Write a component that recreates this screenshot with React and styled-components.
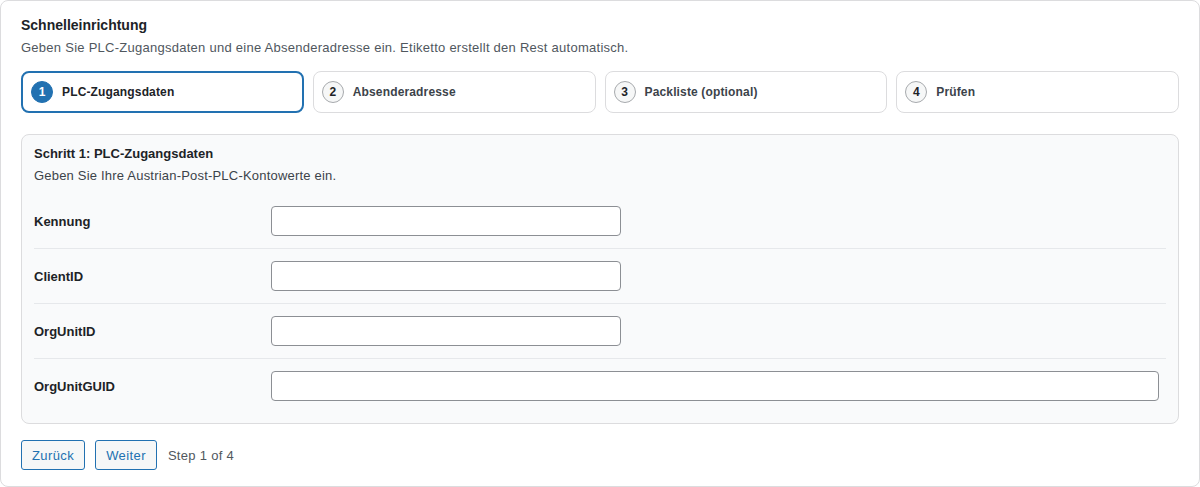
import React from 'react'
import styled, { createGlobalStyle } from 'styled-components'

const GlobalStyle = createGlobalStyle`
  html, body {
    margin: 0;
    padding: 0;
    background: #ffffff;
  }
  body {
    font-family: "Liberation Sans", Arial, sans-serif;
    color: #1d2327;
    -webkit-font-smoothing: antialiased;
  }
  * {
    box-sizing: border-box;
  }
`;

const Card = styled.div`
  width: 1200px;
  height: 487px;
  border: 1px solid #dcdcde;
  border-radius: 8px;
  background: #ffffff;
  padding: 14px 20px 16px;
  display: flex;
  flex-direction: column;
`;

const Title = styled.h2`
  font-size: 14px;
  font-weight: 700;
  line-height: 20px;
  margin: 0;
  color: #1d2327;
`;

const Intro = styled.p`
  font-size: 13px;
  line-height: 18px;
  margin: 4px 0 0;
  color: #50575e;
  letter-spacing: 0.26px;
`;

const Steps = styled.div`
  display: grid;
  grid-template-columns: repeat(4, 1fr);
  gap: 9px;
  margin-top: 14px;
`;

const Step = styled.div`
  height: 42px;
  display: flex;
  align-items: center;
  gap: 9px;
  padding: 0 8px;
  border: ${p => (p.$active ? '2px solid #2271b1' : '1px solid #dcdcde')};
  border-radius: 8px;
  background: #ffffff;
`;

const StepNumber = styled.span`
  width: 22px;
  height: 22px;
  flex: none;
  border-radius: 50%;
  display: flex;
  align-items: center;
  justify-content: center;
  font-size: 12px;
  font-weight: 700;
  background: ${p => (p.$active ? '#2271b1' : '#f6f7f7')};
  color: ${p => (p.$active ? '#ffffff' : '#1d2327')};
  border: 1px solid ${p => (p.$active ? '#2271b1' : '#a7aaad')};
`;

const StepLabel = styled.span`
  font-size: 12px;
  font-weight: 700;
  letter-spacing: 0.15px;
  color: ${p => (p.$active ? '#1d2327' : '#3c434a')};
`;

const Panel = styled.section`
  margin-top: 21px;
  border: 1px solid #dcdcde;
  border-radius: 8px;
  background: #f9fafb;
  padding: 10px 12px 10px;
`;

const PanelTitle = styled.h3`
  font-size: 13px;
  font-weight: 700;
  line-height: 18px;
  margin: 0;
  color: #1d2327;
`;

const PanelText = styled.p`
  font-size: 13px;
  line-height: 18px;
  margin: 4px 0 0;
  color: #3c434a;
  letter-spacing: 0.2px;
`;

const Fields = styled.div`
  margin-top: 9px;
`;

const Row = styled.div`
  display: grid;
  grid-template-columns: 237px 1fr;
  align-items: center;
  padding: 12px 0;
  border-top: ${p => (p.$first ? 'none' : '1px solid #e6e8eb')};
`;

const Label = styled.label`
  font-size: 13px;
  font-weight: 700;
  color: #1d2327;
`;

const Input = styled.input`
  height: 30px;
  width: ${p => (p.$wide ? 'calc(100% - 7px)' : '350px')};
  border: 1px solid #8c8f94;
  border-radius: 4px;
  background: #ffffff;
  padding: 0 8px;
  font-size: 14px;
  font-family: inherit;
  outline: none;
`;

const Actions = styled.div`
  margin-top: auto;
  display: flex;
  align-items: center;
  gap: 10px;
`;

const Button = styled.button`
  height: 30px;
  padding: 0 10px;
  border: 1px solid #2271b1;
  border-radius: 3px;
  background: #f6f7f7;
  color: #2271b1;
  font-size: 13px;
  letter-spacing: 0.4px;
  font-family: inherit;
  cursor: pointer;
`;

const StepInfo = styled.span`
  font-size: 13px;
  color: #50575e;
  letter-spacing: 0.3px;
  margin-left: 1px;
`;

const steps = [
  'PLC-Zugangsdaten',
  'Absenderadresse',
  'Packliste (optional)',
  'Prüfen',
];

const fields = [
  { label: 'Kennung' },
  { label: 'ClientID' },
  { label: 'OrgUnitID' },
  { label: 'OrgUnitGUID', wide: true },
];

export default function App() {
  return (
    <>
      <GlobalStyle />
      <Card>
        <Title>Schnelleinrichtung</Title>
        <Intro>
          Geben Sie PLC-Zugangsdaten und eine Absenderadresse ein. Etiketto erstellt den Rest automatisch.
        </Intro>

        <Steps>
          {steps.map((s, i) => (
            <Step key={s} $active={i === 0}>
              <StepNumber $active={i === 0}>{i + 1}</StepNumber>
              <StepLabel $active={i === 0}>{s}</StepLabel>
            </Step>
          ))}
        </Steps>

        <Panel>
          <PanelTitle>Schritt 1: PLC-Zugangsdaten</PanelTitle>
          <PanelText>Geben Sie Ihre Austrian-Post-PLC-Kontowerte ein.</PanelText>
          <Fields>
            {fields.map((f, i) => (
              <Row key={f.label} $first={i === 0}>
                <Label>{f.label}</Label>
                <Input type="text" $wide={f.wide} />
              </Row>
            ))}
          </Fields>
        </Panel>

        <Actions>
          <Button>Zurück</Button>
          <Button>Weiter</Button>
          <StepInfo>Step 1 of 4</StepInfo>
        </Actions>
      </Card>
    </>
  )
}
